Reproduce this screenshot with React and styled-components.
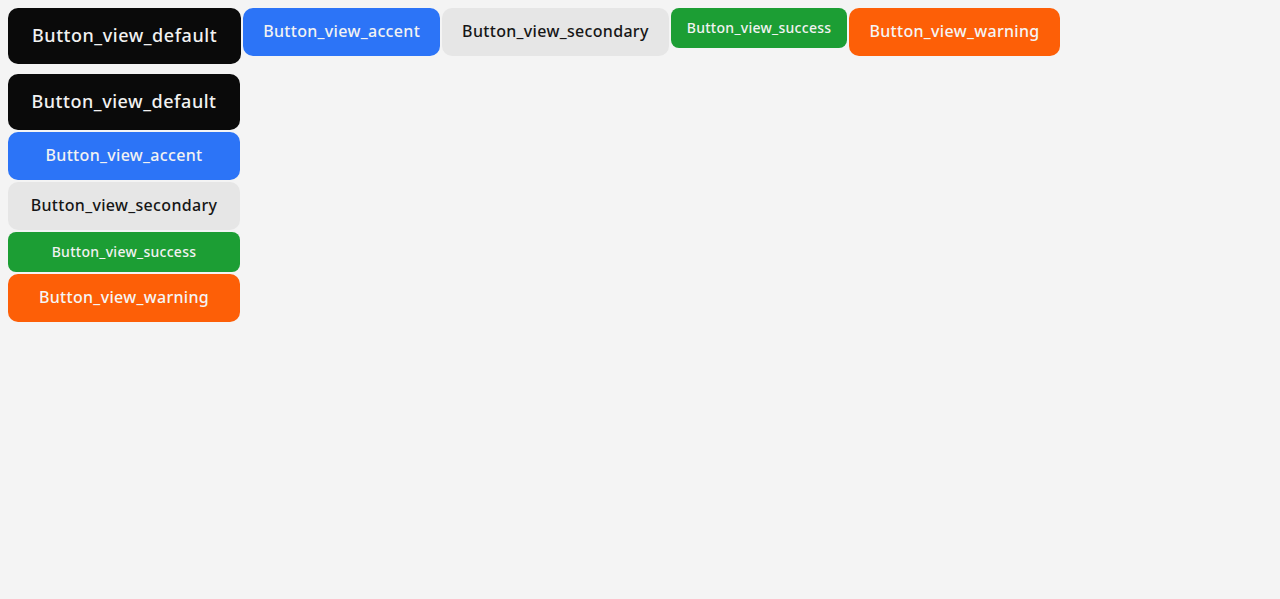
import React from "react";
import styled, { createGlobalStyle, css } from "styled-components";

const Global = createGlobalStyle`
  html, body { margin: 0; padding: 0; background: #f4f4f4; }
  body { font-family: "Noto Sans", "Open Sans", sans-serif; }
`;

const Page = styled.div`
  padding: 8px;
  display: flex;
  flex-direction: column;
  gap: 10px;
`;

const Row = styled.div`
  display: flex;
  gap: 2px;
  align-items: flex-start;
`;

const Column = styled.div`
  display: flex;
  flex-direction: column;
  gap: 2px;
  width: 232px;
`;

const views = {
  default: css`background: #0a0a0a; color: #f2f2f2;`,
  accent: css`background: #2c74f7; color: #f2f2f2;`,
  secondary: css`background: #e6e6e6; color: #161616;`,
  success: css`background: #1c9e34; color: #f2f2f2;`,
  warning: css`background: #fd5f07; color: #f5f5f5;`,
};

const sizes = {
  xl: css`height: 56px; padding: 0 24px 2px; font-size: 18px; letter-spacing: 0.03em; border-radius: 10px;`,
  l: css`height: 48px; padding: 0 20px 2px; font-size: 16px; letter-spacing: 0.02em; border-radius: 10px;`,
  m: css`height: 40px; padding: 0 16px 2px; font-size: 14px; letter-spacing: 0.02em; border-radius: 8px;`,
};

const Button = styled.button`
  display: inline-flex;
  align-items: center;
  justify-content: center;
  border: none;
  font-family: inherit;
  font-weight: 500;
  white-space: nowrap;
  cursor: pointer;
  box-sizing: border-box;
  ${(p) => sizes[p.$size]}
  ${(p) => views[p.$view]}
  ${(p) => p.$block && css`width: 100%;`}
`;

const items = [
  { view: "default", size: "xl" },
  { view: "accent", size: "l" },
  { view: "secondary", size: "l" },
  { view: "success", size: "m" },
  { view: "warning", size: "l" },
];

export default function App() {
  return (
    <>
      <Global />
      <Page>
        <Row>
          {items.map((b) => (
            <Button key={b.view} $view={b.view} $size={b.size}>
              Button_view_{b.view}
            </Button>
          ))}
        </Row>
        <Column>
          {items.map((b) => (
            <Button key={b.view} $view={b.view} $size={b.size} $block>
              Button_view_{b.view}
            </Button>
          ))}
        </Column>
      </Page>
    </>
  );
}
